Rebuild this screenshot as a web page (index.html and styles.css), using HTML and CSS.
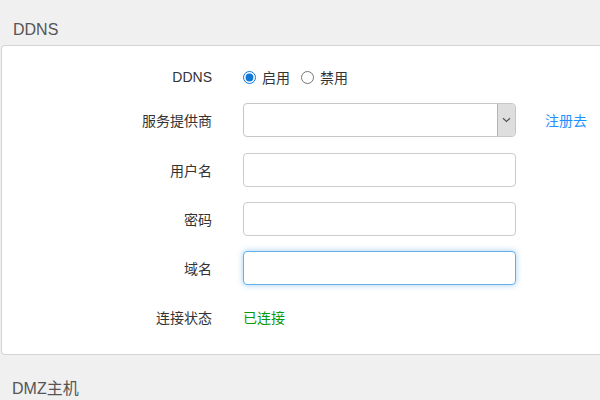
FILE: index.html
```html
<!DOCTYPE html>
<html lang="zh">
<head>
<meta charset="utf-8">
<link rel="stylesheet" href="styles.css">
</head>
<body>
<div class="section-title">DDNS</div>
<div class="panel">
  <div class="row row-first">
    <label class="label">DDNS</label>
    <div class="radios">
      <label class="radio"><input type="radio" name="ddns" checked><span>启用</span></label>
      <label class="radio"><input type="radio" name="ddns"><span>禁用</span></label>
    </div>
  </div>
  <div class="row row-select">
    <label class="label">服务提供商</label>
    <div class="select">
      <span class="select-arrow">
        <svg width="9" height="6" viewBox="0 0 9 6"><path d="M1 1.2 L4.5 4.5 L8 1.2" fill="none" stroke="#555" stroke-width="1.2"/></svg>
      </span>
    </div>
    <a class="link">注册去</a>
  </div>
  <div class="row">
    <label class="label">用户名</label>
    <input class="input" type="text">
  </div>
  <div class="row">
    <label class="label">密码</label>
    <input class="input" type="password">
  </div>
  <div class="row">
    <label class="label">域名</label>
    <input class="input input-focus" type="text">
  </div>
  <div class="row row-last">
    <label class="label">连接状态</label>
    <span class="status">已连接</span>
  </div>
</div>
<div class="section-title section-next">DMZ主机</div>
</body>
</html>
```
FILE: styles.css
```css
html, body {
  margin: 0;
  padding: 0;
}
body {
  background: #f0f0f0;
  font-family: "Liberation Sans", "Noto Sans CJK SC", sans-serif;
  font-size: 14px;
  color: #333;
  overflow: hidden;
}
.section-title {
  padding: 19px 13px 0;
  font-size: 16px;
  line-height: 22px;
  color: #555;
}
.section-next {
  padding-top: 23px;
  padding-left: 12px;
}
.panel {
  margin: 4px 0 0 1px;
  background: #fff;
  border: 1px solid #d4d4d4;
  border-right: none;
  border-radius: 4px 0 0 4px;
  padding: 14px 0 20px;
}
.row {
  display: flex;
  align-items: center;
  height: 34px;
  margin-bottom: 15px;
}
.row-first {
  margin-bottom: 9px;
}
.row-select {
  margin-bottom: 16px;
}
.row-last {
  margin-bottom: 0;
}
.label {
  width: 210px;
  text-align: right;
  margin-right: 31px;
  color: #333;
  flex: none;
}
.radios {
  display: flex;
  align-items: center;
  gap: 11px;
}
.radio {
  display: flex;
  align-items: center;
  gap: 6px;
}
.radio input {
  margin: 0;
  width: 13px;
  height: 13px;
  accent-color: #0f78d7;
}
.input {
  box-sizing: border-box;
  width: 273px;
  height: 34px;
  margin: 0;
  padding: 0 8px;
  border: 1px solid #cccccc;
  border-radius: 4px;
  background: #fff;
  outline: none;
  font: inherit;
}
.input-focus {
  border-color: #66afe9;
  box-shadow: 0 0 6px rgba(102, 175, 233, 0.6);
}
.select {
  box-sizing: border-box;
  width: 273px;
  height: 34px;
  border: 1px solid #c6c6c6;
  border-radius: 4px;
  background: #fff;
  display: flex;
  justify-content: flex-end;
  overflow: hidden;
}
.select-arrow {
  width: 17px;
  height: 100%;
  background: #dedede;
  border-left: 1px solid #b4b4b4;
  display: flex;
  align-items: center;
  justify-content: center;
}
.link {
  margin-left: 29px;
  color: #1e90ff;
  cursor: pointer;
}
.status {
  color: #0a9a0a;
}
```
